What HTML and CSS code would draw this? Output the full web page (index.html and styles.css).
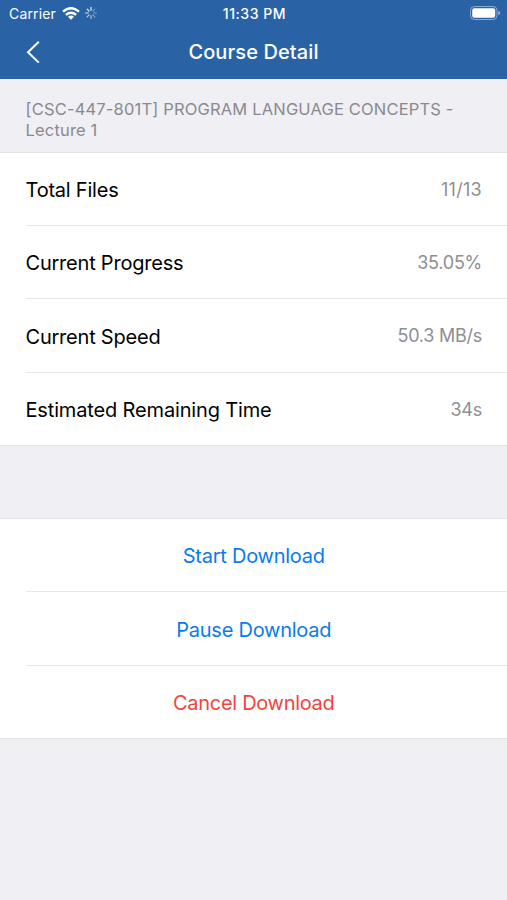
FILE: index.html
```html
<!DOCTYPE html>
<html lang="en">
<head>
<meta charset="utf-8">
<title>Course Detail</title>
<link rel="stylesheet" href="styles.css">
</head>
<body>
<header class="header">
  <div class="status">
    <div class="carrier"><span>Carrier</span>
      <svg class="wifi" viewBox="0 0 18 13" width="18" height="13"><g fill="none" stroke="#fff" stroke-width="2.5"><path d="M1 4.6Q9-2.2 17 4.6"/><path d="M3.9 7.9Q9 3.6 14.1 7.9"/></g><path d="M6 9.8Q9 7.4 12 9.8L9 12.8Z" fill="#fff"/></svg>
      <svg class="spinner" viewBox="0 0 12 12" width="12" height="12" stroke="#fff" stroke-width="1.2" stroke-linecap="round"><path d="M6 .6V3.3" opacity=".9"/><path d="M9.8 2.2L7.9 4.1" opacity=".35"/><path d="M11.4 6H8.7" opacity=".4"/><path d="M9.8 9.8L7.9 7.9" opacity=".45"/><path d="M6 11.4V8.7" opacity=".6"/><path d="M2.2 9.8L4.1 7.9" opacity=".7"/><path d="M.6 6H3.3" opacity=".8"/><path d="M2.2 2.2L4.1 4.1" opacity=".9"/></svg>
    </div>
    <span class="time">11:33 PM</span>
    <svg class="battery" viewBox="0 0 31 14" width="31" height="14"><rect x=".5" y=".5" width="26.5" height="13" rx="4" fill="none" stroke="#fff" stroke-opacity=".45"/><rect x="2.2" y="2.2" width="23" height="9.6" rx="2" fill="#fff"/><path d="M28.3 4.8Q30.3 5.5 30.3 7T28.3 9.2Z" fill="#fff" opacity=".5"/></svg>
  </div>
  <nav class="nav">
    <svg class="back" viewBox="0 0 14 24" width="14" height="24"><path d="M12.8 1.8L2 12.2L12.8 22.6" fill="none" stroke="#fff" stroke-width="2"/></svg>
    <h1 class="title">Course Detail</h1>
    <span></span>
  </nav>
</header>
<p class="caption">[CSC-447-801T] PROGRAM LANGUAGE CONCEPTS -<br>Lecture 1</p>
<ul class="list details">
  <li class="row"><span class="label">Total Files</span><span class="value fraction">11/13</span></li>
  <li class="row"><span class="label">Current Progress</span><span class="value">35.05%</span></li>
  <li class="row"><span class="label">Current Speed</span><span class="value">50.3 MB/s</span></li>
  <li class="row"><span class="label long">Estimated Remaining Time</span><span class="value">34s</span></li>
</ul>
<ul class="list actions">
  <li class="row"><a class="action">Start Download</a></li>
  <li class="row"><a class="action">Pause Download</a></li>
  <li class="row"><a class="action danger">Cancel Download</a></li>
</ul>
</body>
</html>
```
FILE: styles.css
```css
* { box-sizing: border-box; }
body { margin: 0; min-height: 900px; background: #efeff4; font-family: Inter, "Liberation Sans", sans-serif; color: #000; }
.header { height: 79px; background: #2963a6; color: #fff; }
.status { height: 27px; padding: 0 6px 0 9px; display: grid; grid-template-columns: 1fr auto 1fr; align-items: center; }
.carrier { display: flex; align-items: center; font-size: 14px; letter-spacing: .15px; }
.wifi { margin-left: 6px; margin-top: -1px; }
.spinner { margin-left: 5px; margin-top: -1px; }
.time { font-size: 14px; font-weight: 550; letter-spacing: .55px; margin-right: 1px; }
.battery { justify-self: end; margin-top: -1px; }
.nav { height: 50px; padding: 0 26px; display: grid; grid-template-columns: 1fr auto 1fr; align-items: center; }
.title { margin: 0; font-size: 20px; font-weight: 550; letter-spacing: .1px; }
.caption { margin: 0; height: 73px; padding: 20px 25.5px 0; font-size: 16.5px; line-height: 20.5px; letter-spacing: .17px; color: #8a8a8e; white-space: nowrap; }
.list { margin: 0; padding: 0; list-style: none; background: #fff; border-top: 1px solid #e4e4e7; border-bottom: 1px solid #e4e4e7; }
.row { height: 73px; margin-left: 25.5px; padding-right: 25px; display: flex; align-items: center; justify-content: space-between; font-size: 20px; letter-spacing: -.22px; }
.row:first-child { height: 72px; }
.row + .row { border-top: 1px solid #e8e8ea; }
.details .row:nth-child(3), .actions .row:nth-child(2) { height: 74px; }
.label, .action { padding-top: 2px; }
.long { letter-spacing: -.15px; }
.value { font-size: 18px; color: #8e8e93; letter-spacing: -.25px; }
.fraction { letter-spacing: .3px; }
.actions { margin-top: 72px; }
.actions .row { justify-content: center; }
.action { color: #0a7bea; letter-spacing: -.25px; }
.danger { color: #f1453d; letter-spacing: -.3px; }
```
